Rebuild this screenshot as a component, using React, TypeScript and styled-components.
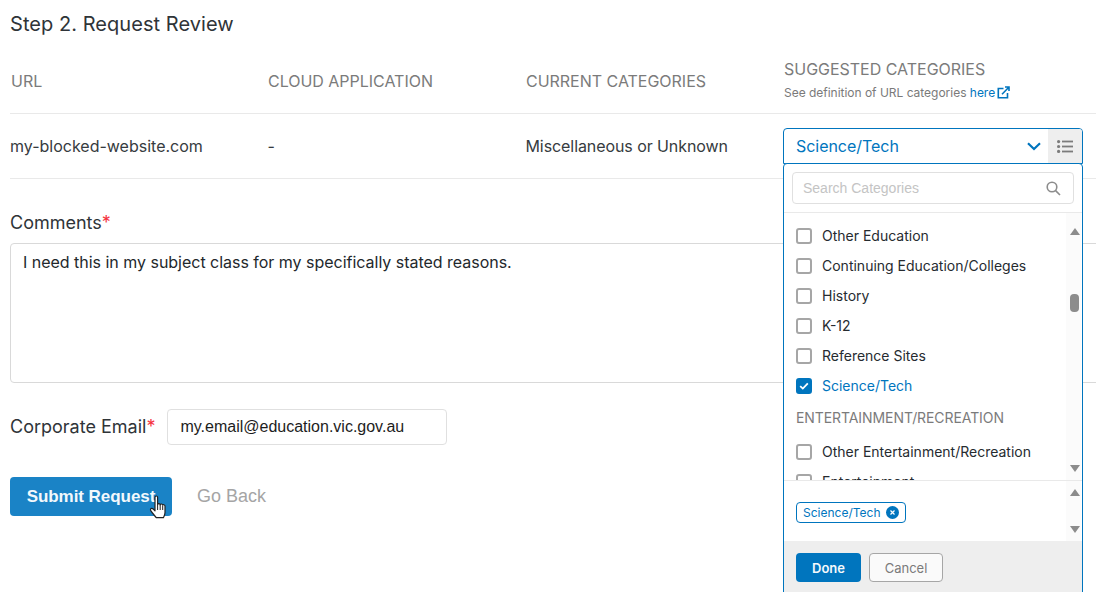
import React from 'react';
import styled, { createGlobalStyle } from 'styled-components';

const GlobalStyle = createGlobalStyle`
  html, body {
    margin: 0;
    padding: 0;
    background: #fff;
    overflow: hidden;
    height: 592px;
  }
  * { box-sizing: border-box; }
`;

const Page = styled.div`
  position: relative;
  width: 1096px;
  height: 592px;
  overflow: hidden;
  padding: 11px 0 0 10px;
  font-family: Inter, 'Liberation Sans', sans-serif;
  color: #2d3338;
`;

const Title = styled.h1`
  margin: 0;
  font-size: 20px;
  line-height: 26px;
  font-weight: 400;
  letter-spacing: 0.05px;
  color: #2f3438;
`;

const HeaderRow = styled.div`
  display: grid;
  grid-template-columns: repeat(4, 258px) 1fr;
  align-items: center;
  height: 77px;
  margin-right: -20px;
  border-bottom: 1px solid #e9e9e9;
`;

const HeaderCell = styled.div`
  font-size: 16px;
  line-height: 20px;
  color: #7b7b7b;
  padding-top: 11px;
  letter-spacing: -0.02px;
  &:first-child { padding-left: 1px; }
  &:nth-child(4) { padding-top: 9px; }
`;

const HeaderNote = styled.div`
  font-size: 12px;
  line-height: 16px;
  margin-top: 6px;
  color: #7a7a7a;
  display: flex;
  align-items: center;
  gap: 2px;
  letter-spacing: -0.02px;
  a { color: #0075be; text-decoration: none; }
`;

const BodyRow = styled.div`
  display: grid;
  grid-template-columns: repeat(4, 258px) 1fr;
  align-items: center;
  height: 65px;
  margin-right: -20px;
  border-bottom: 1px solid #e9e9e9;
  font-size: 16px;
`;

const BodyCell = styled.div`
  color: #363b40;
  &:nth-child(2) { margin-left: -0.5px; }
  &:nth-child(3) { margin-left: -0.5px; letter-spacing: -0.08px; }
`;

const SelectBox = styled.div`
  display: flex;
  width: 300px;
  height: 36px;
  margin-left: -1px;
  border: 1px solid #0075be;
  border-radius: 4px 4px 0 0;
  overflow: hidden;
`;

const SelectValue = styled.div`
  flex: 1;
  display: flex;
  align-items: center;
  justify-content: space-between;
  padding: 0 7px 0 12px;
  font-size: 16px;
  letter-spacing: -0.04px;
  color: #0075be;
`;

const ListToggle = styled.div`
  width: 34px;
  display: flex;
  align-items: center;
  justify-content: center;
  background: #eee;
`;

const Label = styled.div`
  font-size: 18px;
  line-height: 24px;
  color: #2f3438;
  span { color: #f5333f; }
`;

const CommentsLabel = styled(Label)`
  margin-top: 32px;
`;

const CommentsBox = styled.div`
  width: 1110px;
  height: 140px;
  margin-top: 8px;
  padding: 8px 12px;
  border: 1px solid #d9d9d9;
  border-radius: 4px;
  font-size: 16px;
  line-height: 20px;
  letter-spacing: -0.02px;
  color: #23282c;
`;

const EmailRow = styled.div`
  display: flex;
  align-items: center;
  gap: 12px;
  margin-top: 26px;
`;

const EmailInput = styled.div`
  width: 280px;
  height: 36px;
  padding-left: 12px;
  display: flex;
  align-items: center;
  border: 1px solid #e0e0e0;
  border-radius: 4px;
  font-family: 'Liberation Sans', Arial, sans-serif;
  font-size: 16px;
  color: #1d1d1d;
`;

const Actions = styled.div`
  display: flex;
  align-items: center;
  gap: 25px;
  margin-top: 32px;
  font-family: 'Liberation Sans', Arial, sans-serif;
`;

const SubmitButton = styled.div`
  width: 162px;
  height: 39px;
  display: flex;
  align-items: center;
  justify-content: center;
  background: #1a83c6;
  border-radius: 4px;
  color: #f2f8fc;
  font-size: 17px;
  font-weight: 700;
  letter-spacing: -0.05px;
`;

const GoBack = styled.div`
  font-size: 18px;
  color: #a5a5a5;
`;

const Pointer = styled.svg`
  position: absolute;
  left: 149px;
  top: 495px;
`;

const Popover = styled.div`
  position: absolute;
  left: 783px;
  top: 163px;
  width: 300px;
  height: 445px;
  background: #fff;
  border: 1px solid #0075be;
  border-radius: 4px 4px 0 0;
  display: flex;
  flex-direction: column;
`;

const SearchArea = styled.div`
  height: 49px;
  flex: none;
  padding: 8px 8px 0;
  border-bottom: 1px solid #e9e9e9;
`;

const SearchBox = styled.div`
  height: 32px;
  display: flex;
  align-items: center;
  justify-content: space-between;
  padding: 0 12px 0 10px;
  border: 1px solid #e0e0e0;
  border-radius: 4px;
  font-family: 'Liberation Sans', Arial, sans-serif;
  font-size: 14px;
  color: #c4c4c4;
`;

const ListArea = styled.div`
  position: relative;
  height: 268px;
  flex: none;
  overflow: hidden;
  padding: 8px 0 0 12px;
  border-bottom: 1px solid #e9e9e9;
`;

const Option = styled.div<{ $selected?: boolean }>`
  display: flex;
  align-items: center;
  gap: 10px;
  height: 30px;
  font-size: 14px;
  color: ${p => (p.$selected ? '#0075be' : '#262b30')};
`;

const OptionText = styled.span`
  padding-bottom: 2px;
`;

const Checkbox = styled.div<{ $checked?: boolean }>`
  width: 16px;
  height: 16px;
  display: flex;
  align-items: center;
  justify-content: center;
  border: 2px solid ${p => (p.$checked ? '#0075be' : '#a6a6a6')};
  border-radius: 3px;
  background: ${p => (p.$checked ? '#0075be' : '#fff')};
`;

const GroupTitle = styled.div`
  height: 36px;
  line-height: 34px;
  font-size: 14px;
  letter-spacing: -0.08px;
  color: #7b7b7b;
`;

const Scrollbar = styled.div`
  position: absolute;
  top: 0;
  bottom: 0;
  right: 1px;
  width: 15px;
  background: #fbfbfb;
`;

const ArrowUp = styled.div<{ $top: number }>`
  position: absolute;
  left: 3.500px;
  top: ${p => p.$top}px;
  border-left: 5px solid transparent;
  border-right: 5px solid transparent;
  border-bottom: 7px solid #8c8c8c;
`;

const ArrowDown = styled.div<{ $top: number }>`
  position: absolute;
  left: 3.500px;
  top: ${p => p.$top}px;
  border-left: 5px solid transparent;
  border-right: 5px solid transparent;
  border-top: 7px solid #8c8c8c;
`;

const Thumb = styled.div`
  position: absolute;
  left: 4px;
  top: 81px;
  width: 9px;
  height: 18px;
  border-radius: 4px;
  background: #8c8c8c;
`;

const SelectedArea = styled.div`
  position: relative;
  height: 60px;
  flex: none;
  padding: 20px 0 0 12px;
`;

const Tag = styled.div`
  display: inline-flex;
  align-items: center;
  gap: 6px;
  height: 21px;
  padding: 0 6px;
  border: 1px solid #0075be;
  border-radius: 4px;
  font-size: 12px;
  color: #0075be;
`;

const TagClose = styled.div`
  width: 13px;
  height: 13px;
  display: flex;
  align-items: center;
  justify-content: center;
  border-radius: 50%;
  background: #0075be;
`;

const Footer = styled.div`
  flex: 1;
  display: flex;
  gap: 8px;
  padding: 12px 12px 0;
  background: #eee;
`;

const DoneButton = styled.div`
  width: 65px;
  height: 29px;
  display: flex;
  align-items: center;
  justify-content: center;
  background: #0075be;
  border-radius: 4px;
  color: #f4f9fc;
  font-size: 13px;
  font-weight: 600;
`;

const CancelButton = styled.div`
  width: 74px;
  height: 29px;
  display: flex;
  align-items: center;
  justify-content: center;
  background: #fafafa;
  border: 1px solid #a6a6a6;
  border-radius: 4px;
  color: #7b7b7b;
  font-size: 13px;
`;

const options = ['Other Education', 'Continuing Education/Colleges', 'History', 'K-12', 'Reference Sites'];

const CheckMark = () => (
  <svg width="10" height="8" viewBox="0 0 10 8">
    <path d="M1.2 4.2 3.800 6.600 8.800 1.400" fill="none" stroke="#fff" strokeWidth="1.8" />
  </svg>
);

const App = () => {
  return (
    <Page>
      <GlobalStyle />
      <Title>Step 2. Request Review</Title>
      <HeaderRow>
        <HeaderCell>URL</HeaderCell>
        <HeaderCell>CLOUD APPLICATION</HeaderCell>
        <HeaderCell>CURRENT CATEGORIES</HeaderCell>
        <HeaderCell>
          SUGGESTED CATEGORIES
          <HeaderNote>
            <span>
              See definition of URL categories <a href="#here">here</a>
            </span>
            <svg width="13" height="13" viewBox="0 0 13 13" fill="none" stroke="#0075be" strokeWidth="1.6">
              <path d="M6.500 2.500H1.300v9.200h9.200V7" />
              <path d="M5 8.200 11.800 1.300M8 1h4v4" />
            </svg>
          </HeaderNote>
        </HeaderCell>
      </HeaderRow>
      <BodyRow>
        <BodyCell>my-blocked-website.com</BodyCell>
        <BodyCell>-</BodyCell>
        <BodyCell>Miscellaneous or Unknown</BodyCell>
        <SelectBox>
          <SelectValue>
            Science/Tech
            <svg width="14" height="9" viewBox="0 0 14 9" fill="none" stroke="#0075be" strokeWidth="2.2">
              <path d="M1 1.200 7 7l6-5.800" />
            </svg>
          </SelectValue>
          <ListToggle>
            <svg width="16" height="13" viewBox="0 0 16 13" fill="#7b7b7b">
              <circle cx="1.600" cy="1.600" r="1.600" />
              <circle cx="1.600" cy="6.500" r="1.600" />
              <circle cx="1.600" cy="11.400" r="1.600" />
              <rect x="5" y="0.600" width="11" height="1.800" />
              <rect x="5" y="5.600" width="11" height="1.800" />
              <rect x="5" y="10.600" width="11" height="1.800" />
            </svg>
          </ListToggle>
        </SelectBox>
      </BodyRow>
      <CommentsLabel>
        Comments<span>*</span>
      </CommentsLabel>
      <CommentsBox>I need this in my subject class for my specifically stated reasons.</CommentsBox>
      <EmailRow>
        <Label>
          Corporate Email<span>*</span>
        </Label>
        <EmailInput>my.email@education.vic.gov.au</EmailInput>
      </EmailRow>
      <Actions>
        <SubmitButton>Submit Request</SubmitButton>
        <GoBack>Go Back</GoBack>
      </Actions>
      <Pointer width="20" height="28" viewBox="0 0 20 28">
        <path
          d="M6 2.200c0-1.600 2.600-1.600 2.600 0v7.400c.4-1.300 2.400-1.200 2.600.2.4-1.200 2.300-1 2.500.4.5-.9 2.200-.6 2.300.9v6.400c0 2.400-.9 3.600-1.600 5.200H7.300C5.600 20.400 3.600 18.600 1.800 15.600.8 13.800 2.800 12.600 4.200 14L6 15.800Z"
          fill="#fff"
          stroke="#222"
          strokeWidth="1.2"
          strokeLinejoin="round"
        />
        <path d="M8.600 10v5M11.200 10v5M13.700 10.800V15" stroke="#222" strokeWidth="1" fill="none" />
      </Pointer>
      <Popover>
        <SearchArea>
          <SearchBox>
            Search Categories
            <svg width="15" height="15" viewBox="0 0 15 15" fill="none" stroke="#8c8c8c" strokeWidth="1.6">
              <circle cx="6" cy="6" r="4.800" />
              <path d="M9.600 9.600 14 14" />
            </svg>
          </SearchBox>
        </SearchArea>
        <ListArea>
          {options.map(option => (
            <Option key={option}>
              <Checkbox />
              <OptionText>{option}</OptionText>
            </Option>
          ))}
          <Option $selected>
            <Checkbox $checked>
              <CheckMark />
            </Checkbox>
            <OptionText>Science/Tech</OptionText>
          </Option>
          <GroupTitle>ENTERTAINMENT/RECREATION</GroupTitle>
          <Option>
            <Checkbox />
            <OptionText>Other Entertainment/Recreation</OptionText>
          </Option>
          <Option>
            <Checkbox />
            <OptionText>Entertainment</OptionText>
          </Option>
          <Scrollbar>
            <ArrowUp $top={15} />
            <Thumb />
            <ArrowDown $top={252} />
          </Scrollbar>
        </ListArea>
        <SelectedArea>
          <Tag>
            Science/Tech
            <TagClose>
              <svg width="5" height="5" viewBox="0 0 5 5" stroke="#fff" strokeWidth="1.2">
                <path d="M.5.5l4 4M4.500.5l-4 4" />
              </svg>
            </TagClose>
          </Tag>
          <Scrollbar>
            <ArrowUp $top={8} />
            <ArrowDown $top={45} />
          </Scrollbar>
        </SelectedArea>
        <Footer>
          <DoneButton>Done</DoneButton>
          <CancelButton>Cancel</CancelButton>
        </Footer>
      </Popover>
    </Page>
  );
};

export default App;
